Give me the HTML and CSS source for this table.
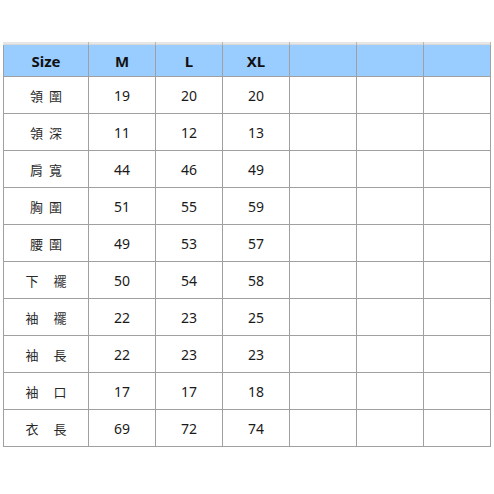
FILE: index.html
```html
<!DOCTYPE html>
<html>
<head>
<meta charset="utf-8">
<link rel="stylesheet" href="styles.css">
</head>
<body>
<table class="size-table">
  <colgroup>
    <col class="c-first"><col class="c"><col class="c"><col class="c"><col class="c"><col class="c"><col class="c">
  </colgroup>
  <thead>
    <tr class="top-rule"><th></th><th></th><th></th><th></th><th></th><th></th><th></th></tr>
    <tr class="head"><th>Size</th><th>M</th><th>L</th><th>XL</th><th></th><th></th><th></th></tr>
  </thead>
  <tbody>
    <tr><td class="lbl">領 圍</td><td>19</td><td>20</td><td>20</td><td></td><td></td><td></td></tr>
    <tr><td class="lbl">領 深</td><td>11</td><td>12</td><td>13</td><td></td><td></td><td></td></tr>
    <tr><td class="lbl">肩 寬</td><td>44</td><td>46</td><td>49</td><td></td><td></td><td></td></tr>
    <tr><td class="lbl">胸 圍</td><td>51</td><td>55</td><td>59</td><td></td><td></td><td></td></tr>
    <tr><td class="lbl">腰 圍</td><td>49</td><td>53</td><td>57</td><td></td><td></td><td></td></tr>
    <tr><td class="lbl wide">下 襬</td><td>50</td><td>54</td><td>58</td><td></td><td></td><td></td></tr>
    <tr><td class="lbl wide">袖 襬</td><td>22</td><td>23</td><td>25</td><td></td><td></td><td></td></tr>
    <tr><td class="lbl wide">袖 長</td><td>22</td><td>23</td><td>23</td><td></td><td></td><td></td></tr>
    <tr><td class="lbl wide">袖 口</td><td>17</td><td>17</td><td>18</td><td></td><td></td><td></td></tr>
    <tr><td class="lbl wide">衣 長</td><td>69</td><td>72</td><td>74</td><td></td><td></td><td></td></tr>
  </tbody>
</table>
</body>
</html>
```

FILE: styles.css
```css
html, body {
  margin: 0;
  padding: 0;
  background: #ffffff;
}

body {
  padding: 42px 0 0 3px;
}

.size-table {
  border-collapse: collapse;
  table-layout: fixed;
  width: 488px;
  font-family: "Noto Sans", "Noto Sans CJK TC", sans-serif;
  color: #1a1a1a;
}

.c-first { width: 85px; }
.c { width: 67px; }

.size-table th,
.size-table td {
  border: 1px solid #a0a0a0;
  padding: 0;
  text-align: center;
  vertical-align: middle;
}

.size-table .top-rule th {
  height: 2px;
  background: #e6e6e6;
  border-top: 0;
  border-left: 1px solid #b8b8b8;
  border-right: 1px solid #b8b8b8;
  border-bottom: 0;
}

.size-table .top-rule th:first-child {
  border-left-color: #e6e6e6;
}

.size-table .head th {
  height: 31px;
  background: #99ccff;
  border-top: 1px solid #d8d8d8;
  font-size: 15px;
  font-weight: 700;
  color: #111111;
}

.size-table td {
  height: 36px;
  font-size: 14px;
}

.size-table td.lbl {
  font-family: "Noto Sans CJK TC", sans-serif;
  font-size: 13px;
  color: #2a2a2a;
  word-spacing: 3px;
}

.size-table td.lbl.wide {
  word-spacing: 12px;
}
```
